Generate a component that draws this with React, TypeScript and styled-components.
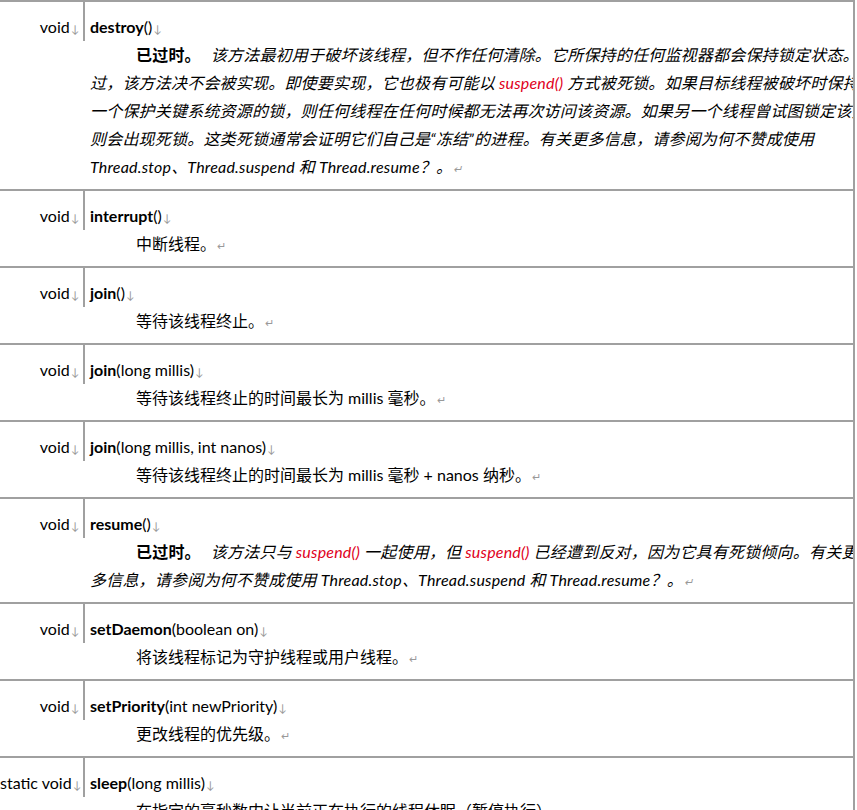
import React from "react";
import styled, { createGlobalStyle } from "styled-components";

const Global = createGlobalStyle`
  html, body { margin: 0; padding: 0; background: #fff; overflow: hidden; }
  body { font-family: Lato, "Noto Sans CJK SC", sans-serif; color: #000; }
`;

const Table = styled.div`
  width: 855px;
  border-top: 2px solid #a0a0a0;
  border-right: 2px solid #a0a0a0;
  box-sizing: border-box;
`;
const Row = styled.div`
  display: grid;
  grid-template-columns: 85px 1fr;
  border-bottom: 2px solid #a0a0a0;
`;
const Type = styled.div`
  border-right: 2px solid #a0a0a0;
  text-align: right;
  padding: 11px 4px 0 0;
  font-size: 16px;
  line-height: 28px;
  height: 28px;
  white-space: nowrap;
`;
const Cell = styled.div`
  padding: 11px 0 8px 5px;
  font-size: 16px;
  overflow: hidden;
`;
const Line = styled.div`
  height: 28px;
  line-height: 28px;
  white-space: nowrap;
`;
const Name = styled.b`font-weight: 700;`;
const Mark = styled.span`
  color: #999;
  font-size: 11px;
  margin-left: 1px;
`;
const Desc = styled.div<{ $italic?: boolean }>`
  font-style: ${(p) => (p.$italic ? "italic" : "normal")};
  letter-spacing: ${(p) => (p.$italic ? "0.2px" : "0")};
`;
const Indent = styled.span`display: inline-block; width: 46px;`;
const Dep = styled.b`font-style: normal; font-weight: 700; margin-right: 10px;`;
const Red = styled.span`color: #e0001b;`;

const T = ({ t }: { t: string }) => (
  <Type>
    {t}
    <Mark>↓</Mark>
  </Type>
);

const Title = ({ n, a }: { n: string; a: string }) => (
  <Line>
    <Name>{n}</Name>({a})<Mark>↓</Mark>
  </Line>
);

const Simple = ({ t, n, a, d }: { t: string; n: string; a: string; d: string }) => (
  <Row>
    <T t={t} />
    <Cell>
      <Title n={n} a={a} />
      <Desc>
        <Line>
          <Indent />
          {d}
          <Mark>↵</Mark>
        </Line>
      </Desc>
    </Cell>
  </Row>
);

export default function App() {
  return (
    <>
      <Global />
      <Table>
        <Row>
          <T t="void" />
          <Cell>
            <Title n="destroy" a="" />
            <Desc $italic>
              <Line>
                <Indent />
                <Dep>已过时。</Dep>该方法最初用于破坏该线程，但不作任何清除。它所保持的任何监视器都会保持锁定状态。不
              </Line>
              <Line>
                过，该方法决不会被实现。即使要实现，它也极有可能以 <Red>suspend()</Red> 方式被死锁。如果目标线程被破坏时保持
              </Line>
              <Line>一个保护关键系统资源的锁，则任何线程在任何时候都无法再次访问该资源。如果另一个线程曾试图锁定该资源，</Line>
              <Line>则会出现死锁。这类死锁通常会证明它们自己是“冻结”的进程。有关更多信息，请参阅为何不赞成使用</Line>
              <Line>
                Thread.stop、Thread.suspend 和 Thread.resume？。<Mark>↵</Mark>
              </Line>
            </Desc>
          </Cell>
        </Row>
        <Simple t="void" n="interrupt" a="" d="中断线程。" />
        <Simple t="void" n="join" a="" d="等待该线程终止。" />
        <Simple t="void" n="join" a="long millis" d="等待该线程终止的时间最长为 millis 毫秒。" />
        <Simple t="void" n="join" a="long millis, int nanos" d="等待该线程终止的时间最长为 millis 毫秒 + nanos 纳秒。" />
        <Row>
          <T t="void" />
          <Cell>
            <Title n="resume" a="" />
            <Desc $italic>
              <Line>
                <Indent />
                <Dep>已过时。</Dep>该方法只与 <Red>suspend()</Red> 一起使用，但 <Red>suspend()</Red> 已经遭到反对，因为它具有死锁倾向。有关更
              </Line>
              <Line>
                多信息，请参阅为何不赞成使用 Thread.stop、Thread.suspend 和 Thread.resume？。<Mark>↵</Mark>
              </Line>
            </Desc>
          </Cell>
        </Row>
        <Simple t="void" n="setDaemon" a="boolean on" d="将该线程标记为守护线程或用户线程。" />
        <Simple t="void" n="setPriority" a="int newPriority" d="更改线程的优先级。" />
        <Simple t="static void" n="sleep" a="long millis" d="在指定的毫秒数内让当前正在执行的线程休眠（暂停执行）。" />
      </Table>
    </>
  );
}
